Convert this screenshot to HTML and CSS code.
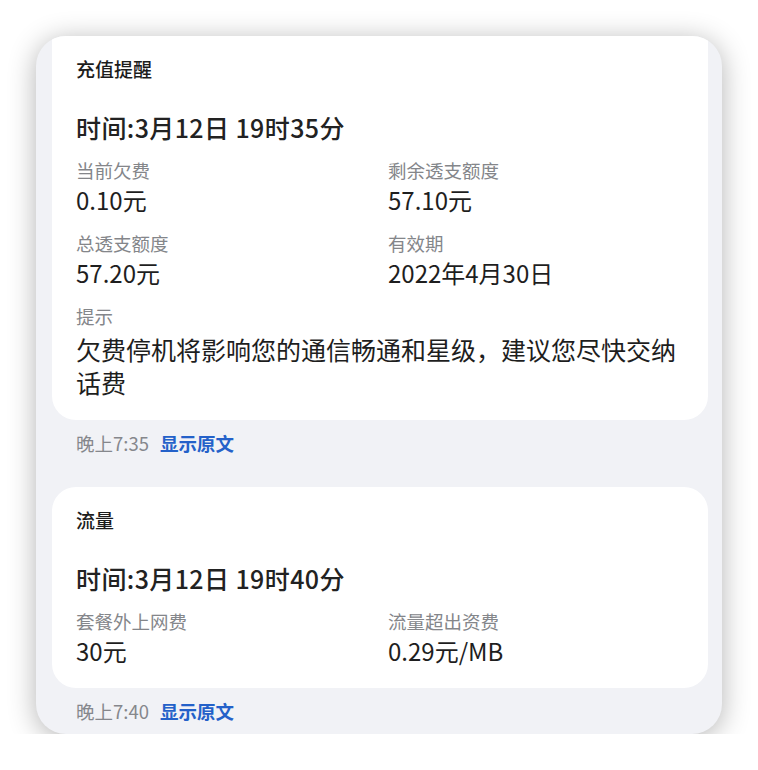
FILE: index.html
```html
<!DOCTYPE html>
<html lang="zh-CN">
<head>
<meta charset="utf-8">
<title>短信</title>
<link rel="stylesheet" href="styles.css">
</head>
<body>
<div class="phone">
  <div class="list">
    <div class="msg">
      <div class="card card-first">
        <div class="title">充值提醒</div>
        <div class="time">时间:3月12日 19时35分</div>
        <div class="grid">
          <div class="field">
            <div class="label">当前欠费</div>
            <div class="value">0.10元</div>
          </div>
          <div class="field">
            <div class="label">剩余透支额度</div>
            <div class="value">57.10元</div>
          </div>
          <div class="field">
            <div class="label">总透支额度</div>
            <div class="value">57.20元</div>
          </div>
          <div class="field">
            <div class="label">有效期</div>
            <div class="value">2022年4月30日</div>
          </div>
          <div class="field wide">
            <div class="label">提示</div>
            <div class="text">欠费停机将影响您的通信畅通和星级，建议您尽快交纳话费</div>
          </div>
        </div>
      </div>
      <div class="footer"><span class="stamp">晚上7:35</span><span class="link">显示原文</span></div>
    </div>
    <div class="msg">
      <div class="card">
        <div class="title">流量</div>
        <div class="time">时间:3月12日 19时40分</div>
        <div class="grid">
          <div class="field">
            <div class="label">套餐外上网费</div>
            <div class="value">30元</div>
          </div>
          <div class="field">
            <div class="label">流量超出资费</div>
            <div class="value">0.29元/MB</div>
          </div>
        </div>
      </div>
      <div class="footer"><span class="stamp">晚上7:40</span><span class="link">显示原文</span></div>
    </div>
  </div>
</div>
</body>
</html>
```
FILE: styles.css
```css
* { box-sizing: border-box; }
html, body { margin: 0; padding: 0; background: #ffffff; }
body {
  font-family: "Noto Sans CJK SC", "Noto Sans", sans-serif;
  color: #1e1e1e;
  padding: 36px 0 0 36px;
}
.phone {
  width: 686px;
  height: 698px;
  background: #f1f2f6;
  border-radius: 30px;
  overflow: hidden;
  box-shadow: 0 4px 28px rgba(0, 0, 0, 0.3);
}
.list {
  display: flex;
  flex-direction: column;
  gap: 31px;
  padding: 0 14px 0 16px;
}
.card {
  background: #ffffff;
  border-radius: 24px;
  padding: 20px 24px 20px 24px;
  display: flex;
  flex-direction: column;
  gap: 13px;
}
.card-first {
  border-top-left-radius: 0;
  border-top-right-radius: 0;
  padding-bottom: 21px;
}
.title {
  font-size: 19px;
  line-height: 26px;
  font-weight: 500;
  color: #1c1c1c;
  margin-bottom: 15px;
}
.time {
  font-size: 25px;
  line-height: 34px;
  font-weight: 500;
  letter-spacing: 0.4px;
  color: #222222;
}
.grid {
  display: grid;
  grid-template-columns: 1fr 1fr;
  column-gap: 16px;
  row-gap: 13px;
}
.wide { grid-column: 1 / 3; }
.label {
  font-size: 18.5px;
  line-height: 26px;
  color: #84868a;
}
.value {
  font-size: 24px;
  line-height: 34px;
  color: #1e1e1e;
}
.text {
  font-size: 25px;
  line-height: 33px;
  color: #1e1e1e;
  margin-top: 4px;
}
.footer {
  margin-top: 10px;
  padding-left: 24px;
  font-size: 18.5px;
  line-height: 26px;
  display: flex;
  gap: 11px;
}
.stamp { color: #85878c; }
.link { color: #2461c9; font-weight: 700; }
```
